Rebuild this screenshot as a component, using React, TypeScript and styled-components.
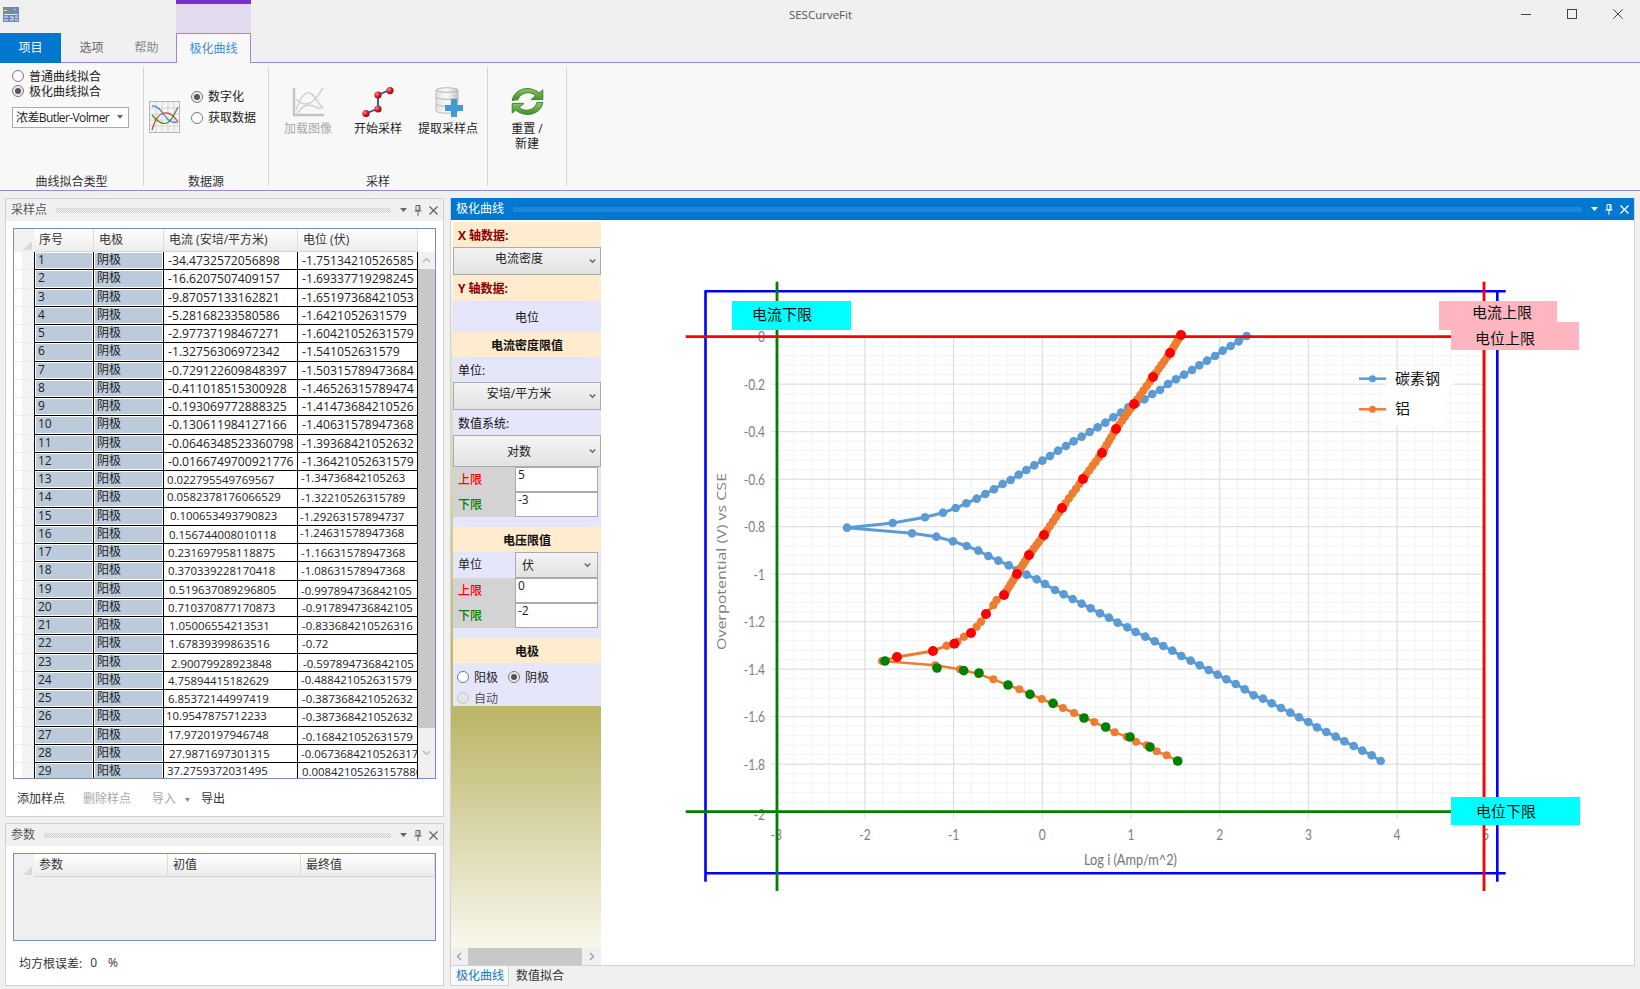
import React from 'react';
import styled, { createGlobalStyle } from 'styled-components';

type Pt = [number, number];

const UI_FONT = '"Open Sans", "Noto Sans CJK SC", sans-serif';

const GlobalStyle = createGlobalStyle`
  html, body {
    margin: 0;
    padding: 0;
    background: #f0f0f0;
    overflow: hidden;
  }
  body {
    font-family: ${UI_FONT};
    font-size: 12px;
    color: #222;
  }
`;

const Window = styled.div`
  width: 1640px;
  height: 989px;
  display: flex;
  flex-direction: column;
  background: #f0f0f0;
  overflow: hidden;
`;

/* ---------- title bar ---------- */

const TitleBar = styled.div`
  height: 33px;
  display: grid;
  grid-template-columns: 176px 75px 1fr 140px;
  flex: none;
`;

const AppIconSlot = styled.div`
  padding: 7px 0 0 3px;
`;

const ContextHeader = styled.div`
  background: #e3daf0;
  border-top: 4px solid #7b2fd0;
`;

const AppTitle = styled.div`
  padding: 7px 110px 0 0;
  text-align: center;
  font-size: 11.5px;
  line-height: 16px;
  color: #555;
`;

const WindowButtons = styled.div`
  display: flex;
  justify-content: flex-end;
  align-items: flex-start;
  gap: 36px;
  padding: 9px 17px 0 0;
`;

/* ---------- ribbon ---------- */

const TabStrip = styled.div`
  height: 29px;
  display: flex;
  flex: none;
  border-bottom: 1px solid #a884d0;
`;

const RibbonTab = styled.div<{ $w: number; $color: string; $bg?: string }>`
  width: ${p => p.$w}px;
  height: 30px;
  line-height: 29px;
  text-align: center;
  color: ${p => p.$color};
  background: ${p => p.$bg ?? 'transparent'};
`;

const ContextTab = styled.div`
  width: 75px;
  height: 30px;
  box-sizing: border-box;
  margin-left: 5px;
  line-height: 29px;
  text-align: center;
  color: #3b8ed8;
  background: #f8f8f8;
  border: 1px solid #a884d0;
  border-bottom: none;
`;

const Ribbon = styled.div`
  height: 128px;
  box-sizing: border-box;
  flex: none;
  display: flex;
  padding: 4px 0;
  background: #f8f8f8;
  border-bottom: 1px solid #a884d0;
`;

const RibbonGroup = styled.div<{ $w: number }>`
  width: ${p => p.$w}px;
  box-sizing: border-box;
  display: flex;
  flex-direction: column;
  border-right: 1px solid #d6d6d6;
`;

const GroupBody = styled.div<{ $pad?: string; $row?: boolean }>`
  flex: 1;
  display: flex;
  flex-direction: ${p => (p.$row ? 'row' : 'column')};
  padding: ${p => p.$pad ?? '0'};
`;

const GroupLabel = styled.div`
  height: 16px;
  line-height: 16px;
  margin-bottom: -4px;
  text-align: center;
  color: #333;
`;

const RadioRow = styled.div<{ $h?: number; $disabled?: boolean }>`
  height: ${p => p.$h ?? 15}px;
  display: flex;
  align-items: center;
  gap: 5px;
  line-height: 15px;
  color: ${p => (p.$disabled ? '#555' : '#222')};
  white-space: nowrap;
`;

const RadioMark = styled.span<{ $checked?: boolean; $disabled?: boolean }>`
  width: 12px;
  height: 12px;
  box-sizing: border-box;
  flex: none;
  border-radius: 50%;
  border: 1px solid ${p => (p.$disabled ? '#c4c4c4' : '#777')};
  background: ${p => (p.$disabled ? '#e4e4e4' : p.$checked ? '#ececec' : '#fff')};
  display: flex;
  align-items: center;
  justify-content: center;
  &::after {
    content: '';
    display: ${p => (p.$checked ? 'block' : 'none')};
    width: 6px;
    height: 6px;
    border-radius: 50%;
    background: #555;
  }
`;

const FitSelect = styled.div`
  width: 117px;
  height: 21px;
  box-sizing: border-box;
  margin-top: 8px;
  padding: 0 5px 0 3px;
  display: flex;
  align-items: center;
  justify-content: space-between;
  background: #fff;
  border: 1px solid #ababab;
  white-space: nowrap;
  letter-spacing: -0.6px;
`;

const SourceIcon = styled.div`
  margin-top: 34px;
  height: 32px;
`;

const SourceRadios = styled.div`
  display: flex;
  flex-direction: column;
  gap: 6px;
  margin: 22px 0 0 11px;
`;

const RibbonButton = styled.div<{ $w: number; $disabled?: boolean }>`
  width: ${p => p.$w}px;
  display: flex;
  flex-direction: column;
  align-items: center;
  color: ${p => (p.$disabled ? '#aaa' : '#222')};
  line-height: 15px;
  text-align: center;
  white-space: nowrap;
`;

const ButtonIcon = styled.div`
  height: 30px;
  margin-bottom: 4px;
`;

/* ---------- dock panels ---------- */

const Workspace = styled.div`
  flex: 1;
  display: flex;
  padding: 7px 0 0 5px;
  gap: 6px;
  min-height: 0;
`;

const LeftColumn = styled.div`
  width: 439px;
  display: flex;
  flex-direction: column;
  gap: 6px;
`;

const Panel = styled.div<{ $h: number }>`
  height: ${p => p.$h}px;
  box-sizing: border-box;
  display: flex;
  flex-direction: column;
  background: #fff;
  border: 1px solid #d2d2d2;
`;

const PanelHeader = styled.div<{ $active?: boolean }>`
  height: 22px;
  flex: none;
  display: flex;
  align-items: center;
  padding: 0 5px;
  background: ${p => (p.$active ? '#0078d0' : '#f0f0f0')};
  color: ${p => (p.$active ? '#fff' : '#555')};
`;

const PanelTitle = styled.div`
  line-height: 22px;
  white-space: nowrap;
`;

const DotStrip = styled.div<{ $active?: boolean }>`
  flex: 1;
  height: 5px;
  margin: 0 9px;
  background-image: conic-gradient(${p => (p.$active ? '#3a96e0' : '#d0d0d0')} 25%, transparent 0 50%, ${p => (p.$active ? '#3a96e0' : '#d0d0d0')} 0 75%, transparent 0);
  background-size: 2px 2px;
`;

const HeaderIcons = styled.div`
  display: flex;
  align-items: center;
  gap: 7px;
`;

const PanelBody = styled.div`
  flex: 1;
  padding: 7px 7px 0;
  display: flex;
  flex-direction: column;
  min-height: 0;
`;

/* ---------- data grid ---------- */

const GridFrame = styled.div<{ $h: number; $bg?: string }>`
  height: ${p => p.$h}px;
  box-sizing: border-box;
  flex: none;
  border: 1px solid #7590b2;
  background: ${p => p.$bg ?? '#fff'};
  display: flex;
  overflow: hidden;
`;

const GridMain = styled.div`
  flex: 1;
  min-width: 0;
`;

const GridHeadRow = styled.div`
  height: 23px;
  display: flex;
  background: #fff;
`;

const CornerCell = styled.div`
  width: 20px;
  flex: none;
  display: flex;
  align-items: flex-end;
  justify-content: flex-end;
  padding: 0 2px 2px 0;
  box-sizing: border-box;
  background: #f1f1f1;
`;

const HeadCell = styled.div<{ $w: number }>`
  width: ${p => p.$w}px;
  box-sizing: border-box;
  flex: none;
  padding-left: 5px;
  line-height: 22px;
  color: #333;
  background: linear-gradient(#ffffff, #ececec);
  border-right: 1px solid #dcdcdc;
  border-bottom: 1px solid #d4d4d4;
  white-space: nowrap;
`;

const DataRow = styled.div`
  height: 18.26px;
  display: flex;
`;

const RowSelector = styled.div`
  width: 20px;
  flex: none;
  box-sizing: border-box;
  background: linear-gradient(90deg, #fff 0 40%, #f3f3f3 40%);
  border-bottom: 1px solid #ececec;
`;

const KeyCell = styled.div<{ $w: number; $first?: boolean }>`
  width: ${p => p.$w}px;
  box-sizing: border-box;
  flex: none;
  padding-left: 3px;
  line-height: 16px;
  background: #bccbdb;
  box-shadow: inset 0 0 0 1px #fff;
  border-right: 1px solid #000;
  border-bottom: 1px solid #000;
  border-left: ${p => (p.$first ? '1px solid #000' : 'none')};
`;

const ValueCell = styled.div<{ $w: number; $pad: number; $small: boolean; $lift: number }>`
  width: ${p => p.$w}px;
  box-sizing: border-box;
  flex: none;
  padding-left: ${p => p.$pad}px;
  font-size: ${p => (p.$small ? 11.4 : 12.2)}px;
  line-height: ${p => 17 - 2 * p.$lift}px;
  background: #fff;
  border-right: 1px solid #000;
  border-bottom: 1px solid #000;
  white-space: nowrap;
  overflow: hidden;
`;

const VScroll = styled.div`
  width: 17px;
  flex: none;
  margin-top: 23px;
  display: flex;
  flex-direction: column;
  background: #f0f0f0;
`;

const ScrollArrow = styled.div<{ $w?: number; $h?: number }>`
  width: ${p => (p.$w ? `${p.$w}px` : 'auto')};
  height: ${p => (p.$h ? `${p.$h}px` : 'auto')};
  flex: none;
  display: flex;
  align-items: center;
  justify-content: center;
`;

const VThumb = styled.div`
  height: 459px;
  background: #c8c8c8;
`;

const GridToolbar = styled.div`
  flex: 1;
  display: flex;
  align-items: center;
  padding-left: 4px;
`;

const ToolItem = styled.div<{ $gap?: number; $disabled?: boolean }>`
  margin-left: ${p => p.$gap ?? 0}px;
  color: ${p => (p.$disabled ? '#a8a8a8' : '#333')};
  white-space: nowrap;
`;

const ErrorLine = styled.div`
  flex: 1;
  display: flex;
  align-items: center;
  padding-left: 6px;
  margin-top: -1px;
  color: #333;
`;

const ErrorValue = styled.span<{ $gap: number }>`
  margin-left: ${p => p.$gap}px;
`;

/* ---------- document panel ---------- */

const DocColumn = styled.div`
  width: 1185px;
  display: flex;
  flex-direction: column;
`;

const DocPanel = styled.div`
  height: 768px;
  box-sizing: border-box;
  display: flex;
  flex-direction: column;
  background: #fff;
  border: 1px solid #d2d2d2;
  border-top: none;
`;

const DocBody = styled.div`
  flex: 1;
  display: flex;
  min-height: 0;
`;

const SideBar = styled.div`
  width: 150px;
  flex: none;
  display: flex;
  flex-direction: column;
  background: linear-gradient(#ffffff 0%, #bdb76b 60%, #bdb76b 67%, #f7f6ea 97%);
`;

const SideContent = styled.div`
  flex: 1;
  padding: 2px 0 0 2px;
`;

const SideRow = styled.div<{ $h: number; $tone: 'peach' | 'lavender'; $align?: string; $bold?: boolean; $color?: string; $pad?: number }>`
  height: ${p => p.$h}px;
  display: flex;
  align-items: center;
  justify-content: ${p => p.$align ?? 'flex-start'};
  padding-left: ${p => p.$pad ?? 5}px;
  box-sizing: border-box;
  background: ${p => (p.$tone === 'peach' ? '#ffebcd' : '#e6e6fa')};
  font-weight: ${p => (p.$bold ? 700 : 400)};
  color: ${p => p.$color ?? '#111'};
  white-space: nowrap;
`;

const SideSelect = styled.div<{ $h: number }>`
  height: ${p => p.$h}px;
  box-sizing: border-box;
  display: flex;
  align-items: center;
  background: linear-gradient(#f4f4f4, #e2e2e2);
  border: 1px solid #ababab;
`;

const SelectText = styled.div<{ $lift?: number }>`
  flex: 1;
  text-align: center;
  padding-bottom: ${p => p.$lift ?? 0}px;
`;

const SelectChevron = styled.div`
  width: 16px;
  flex: none;
  display: flex;
  justify-content: center;
`;

const LimitRow = styled.div`
  height: 25px;
  display: grid;
  grid-template-columns: 62px 83px 3px;
  background: #e6e6fa;
`;

const LimitLabel = styled.div<{ $color: string }>`
  background: #d3d3d3;
  color: ${p => p.$color};
  font-weight: 500;
  line-height: 25px;
  padding-left: 5px;
`;

const LimitInput = styled.div`
  box-sizing: border-box;
  background: #fff;
  border: 1px solid #ababab;
  padding-left: 2px;
  line-height: 14px;
`;

const UnitRow = styled.div`
  height: 26px;
  display: grid;
  grid-template-columns: 62px 83px 3px;
  background: #e6e6fa;
`;

const UnitLabel = styled.div`
  line-height: 26px;
  padding-left: 5px;
`;

const UnitSelect = styled.div`
  box-sizing: border-box;
  padding: 0 6px;
  display: flex;
  align-items: center;
  justify-content: space-between;
  background: linear-gradient(#f4f4f4, #e2e2e2);
  border: 1px solid #ababab;
`;

const Spacer = styled.div<{ $h: number }>`
  height: ${p => p.$h}px;
  background: #e6e6fa;
`;

const ElectrodeBox = styled.div`
  height: 43px;
  box-sizing: border-box;
  padding: 6px 0 0 4px;
  background: #e6e6fa;
  display: flex;
  flex-direction: column;
  gap: 5px;
`;

const RadioLine = styled.div`
  display: flex;
  gap: 10px;
`;

const HScroll = styled.div`
  height: 17px;
  flex: none;
  display: flex;
  background: #f0f0f0;
`;

const HThumb = styled.div`
  width: 114px;
  background: #c8c8c8;
`;

const ChartPane = styled.div`
  position: relative;
  flex: 1;
  overflow: hidden;
`;

const ChartSvg = styled.svg`
  display: block;
`;

const LimitTag = styled.div<{ $x: number; $y: number; $w: number; $h: number; $bg: string; $pad: number; $dy?: number }>`
  position: absolute;
  left: ${p => p.$x - 601}px;
  top: ${p => p.$y - 220}px;
  width: ${p => p.$w}px;
  height: ${p => p.$h}px;
  box-sizing: border-box;
  padding-left: ${p => p.$pad}px;
  background: ${p => p.$bg};
  font-size: 15px;
  line-height: ${p => p.$h + 2 * (p.$dy ?? 0)}px;
  color: #111;
  overflow: hidden;
`;

const DocTabs = styled.div`
  height: 20px;
  display: flex;
  border-left: 1px solid #d2d2d2;
`;

const DocTab = styled.div<{ $active?: boolean }>`
  width: 58px;
  box-sizing: border-box;
  padding-left: ${p => (p.$active ? 5 : 7)}px;
  line-height: 20px;
  white-space: nowrap;
  color: ${p => (p.$active ? '#1a78c8' : '#333')};
  background: ${p => (p.$active ? '#f8f8f8' : 'transparent')};
  border-right: ${p => (p.$active ? '1px solid #d2d2d2' : 'none')};
  border-bottom: ${p => (p.$active ? '1px solid #d2d2d2' : 'none')};
`;

/* ---------- small drawings ---------- */

const AppIcon = () => (
  <svg width="16" height="15" viewBox="0 0 16 15">
    <rect width="16" height="15" fill="#7388b8" />
    <rect x="1" y="3" width="3" height="1" fill="#ffe14a" />
    <rect x="7" y="4" width="2" height="2" fill="#2fbf4f" />
    <rect x="11" y="2" width="2" height="1" fill="#d8e04a" />
    <rect x="1" y="7" width="14" height="1" fill="#dfe6f2" />
    <path d="M1 10h4M1 13h4M7 10h3v3H7M12 10h3M12 13h3" stroke="#e6ecf6" fill="none" />
  </svg>
);

const WinMin = () => (
  <svg width="10" height="10" viewBox="0 0 10 10"><path d="M0 5.5h10" stroke="#444" /></svg>
);
const WinMax = () => (
  <svg width="10" height="10" viewBox="0 0 10 10"><rect x=".5" y=".5" width="9" height="9" fill="none" stroke="#444" /></svg>
);
const WinClose = () => (
  <svg width="10" height="10" viewBox="0 0 10 10"><path d="M.3.3l9.4 9.4M9.7.3L.3 9.7" stroke="#444" /></svg>
);

const TriDown = ({ c = '#666', w = 7 }: { c?: string; w?: number }) => (
  <svg width={w} height="4" viewBox="0 0 7 4" preserveAspectRatio="none"><path d="M0 0h7L3.5 4z" fill={c} /></svg>
);

const PinIcon = ({ c }: { c: string }) => (
  <svg width="8" height="11" viewBox="0 0 8 11">
    <path d="M2 .5h4v5H2zM5 .5v5M.5 6h7M4 6v5" fill="none" stroke={c} />
  </svg>
);

const XIcon = ({ c }: { c: string }) => (
  <svg width="9" height="9" viewBox="0 0 9 9">
    <path d="M.5.5l8 8M8.5.5l-8 8" stroke={c} strokeWidth="1.3" />
  </svg>
);

const Chevron = ({ dir = 'down', c = '#666', s = 9 }: { dir?: 'down' | 'up' | 'left' | 'right'; c?: string; s?: number }) => {
  const d = { down: 'M1 2l3.5 3.5L8 2', up: 'M1 6l3.5-3.5L8 6', left: 'M6 1L2.5 4.5 6 8', right: 'M3 1l3.5 3.5L3 8' }[dir];
  return (
    <svg width={s} height={s} viewBox="0 0 9 9"><path d={d} fill="none" stroke={c} strokeWidth={s < 9 ? 1.8 : 1.2} /></svg>
  );
};

const CornerMark = () => (
  <svg width="9" height="9" viewBox="0 0 9 9"><path d="M9 0v9H0z" fill="#d9d9d9" /></svg>
);

const ChartGlyph = () => (
  <svg width="31" height="32" viewBox="0 0 31 32">
    <rect x=".5" y=".5" width="30" height="31" fill="#f4f4f4" stroke="#b5b5b5" />
    <path d="M1 7h29M1 13h29M1 19h29M1 25h29M7 1v30M13 1v30M19 1v30M25 1v30" stroke="#d4d4d4" />
    <path d="M3 29C6 18 10 13 15 12s10 3 14 9" fill="none" stroke="#d8402f" strokeWidth="1.2" />
    <path d="M3 14c5 6 10 10 15 8s8-10 11-16" fill="none" stroke="#3a8f2e" strokeWidth="1.2" />
    <path d="M3 5c5-1 9 4 13 10s9 7 13 6" fill="none" stroke="#3d76c4" strokeWidth="1.2" />
  </svg>
);

const LoadImageGlyph = () => (
  <svg width="32" height="30" viewBox="0 0 32 30">
    <path d="M2 1v27h30" fill="none" stroke="#c4c4c4" strokeWidth="2.4" />
    <path d="M4 23C9 10 13 4 18 6s8 11 13 15M4 12c6 6 12 7 18 1s7-9 9-12M5 26c6-8 11-9 16-7s7 3 10 1" fill="none" stroke="#cfcfcf" strokeWidth="1.4" />
  </svg>
);

const SampleGlyph = () => (
  <svg width="32" height="30" viewBox="0 0 32 30">
    <defs>
      <radialGradient id="ball" cx=".35" cy=".35" r=".8">
        <stop offset="0" stopColor="#ff8a8a" />
        <stop offset=".5" stopColor="#d2141e" />
        <stop offset="1" stopColor="#7c0a12" />
      </radialGradient>
    </defs>
    <path d="M4 26.500L16 21.500V8L27.500 3" fill="none" stroke="#1f4f9c" strokeWidth="1.8" />
    <circle cx="4" cy="26.500" r="3.600" fill="url(#ball)" />
    <circle cx="16" cy="22" r="3.600" fill="url(#ball)" />
    <circle cx="16" cy="8" r="3.600" fill="url(#ball)" />
    <circle cx="28" cy="3.600" r="3.600" fill="url(#ball)" />
  </svg>
);

const ExtractGlyph = () => (
  <svg width="30" height="31" viewBox="0 0 30 31">
    <defs>
      <linearGradient id="can" x1="0" x2="1" y1="0" y2="0">
        <stop offset="0" stopColor="#e2e2e2" />
        <stop offset=".5" stopColor="#fafafa" />
        <stop offset="1" stopColor="#c6c6c6" />
      </linearGradient>
    </defs>
    <path d="M3 3c0-3 22-3 22 0v21c0 3-22 3-22 0z" fill="url(#can)" stroke="#bdbdbd" />
    <path d="M3 3c0 3 22 3 22 0M3 10c0 3 22 3 22 0M3 17c0 3 22 3 22 0" fill="none" stroke="#b5b5b5" />
    <path d="M18 12h6v6h6v6h-6v6h-6v-6h-6v-6h6z" fill="#3f9ad6" />
  </svg>
);

const RefreshGlyph = () => (
  <svg width="33" height="29" viewBox="3 0 28 30" preserveAspectRatio="none">
    <defs>
      <linearGradient id="arrowGreen" x1="0" x2="0" y1="0" y2="1">
        <stop offset="0" stopColor="#8cc762" />
        <stop offset="1" stopColor="#3f8f2a" />
      </linearGradient>
    </defs>
    <path d="M4 14C5 5 13 0 20 2c3 1 5 2 7 4l3-3v10H20l4-4c-4-5-13-4-15 4z" fill="url(#arrowGreen)" stroke="#2f7a22" strokeWidth=".8" />
    <path d="M30 16c-1 9-9 14-16 12-3-1-5-2-7-4l-3 3V17h10l-4 4c4 5 13 4 15-5z" fill="url(#arrowGreen)" stroke="#2f7a22" strokeWidth=".8" />
  </svg>
);

/* ---------- data ---------- */

const rows: [string, string, string, number, number][] = [
  ['阴极', '-34.4732572056898', '-1.75134210526585', 4, 4],
  ['阴极', '-16.6207507409157', '-1.69337719298245', 4, 4],
  ['阴极', '-9.87057133162821', '-1.65197368421053', 4, 4],
  ['阴极', '-5.28168233580586', '-1.6421052631579', 4, 4],
  ['阴极', '-2.97737198467271', '-1.60421052631579', 4, 4],
  ['阴极', '-1.32756306972342', '-1.541052631579', 4, 4],
  ['阴极', '-0.729122609848397', '-1.50315789473684', 4, 4],
  ['阴极', '-0.411018515300928', '-1.46526315789474', 4, 4],
  ['阴极', '-0.193069772888325', '-1.41473684210526', 4, 4],
  ['阴极', '-0.130611984127166', '-1.40631578947368', 4, 4],
  ['阴极', '-0.0646348523360798', '-1.39368421052632', 4, 4],
  ['阴极', '-0.0166749700921776', '-1.36421052631579', 4, 4],
  ['阳极', '0.022795549769567', '-1.34736842105263', 3, 3],
  ['阳极', '0.0582378176066529', '-1.32210526315789', 3, 3],
  ['阳极', '0.100653493790823', '-1.29263157894737', 6, 2],
  ['阳极', '0.156744008010118', '-1.24631578947368', 5, 2],
  ['阳极', '0.231697958118875', '-1.16631578947368', 4, 3],
  ['阳极', '0.370339228170418', '-1.08631578947368', 4, 3],
  ['阳极', '0.519637089296805', '-0.997894736842105', 5, 3],
  ['阳极', '0.710370877170873', '-0.917894736842105', 4, 4],
  ['阳极', '1.05006554213531', '-0.833684210526316', 5, 4],
  ['阳极', '1.67839399863516', '-0.72', 5, 4],
  ['阳极', '2.90079928923848', '-0.597894736842105', 7, 5],
  ['阳极', '4.75894415182629', '-0.488421052631579', 4, 3],
  ['阳极', '6.85372144997419', '-0.387368421052632', 4, 4],
  ['阳极', '10.9547875712233', '-0.387368421052632', 2, 4],
  ['阳极', '17.9720197946748', '-0.168421052631579', 4, 4],
  ['阳极', '27.9871697301315', '-0.0673684210526317', 5, 3],
  ['阳极', '37.2759372031495', '0.00842105263157886', 3, 4],
];

const currentLift: Record<number, number> = { 13: 1, 14: 1, 25: 1, 26: 1, 28: 1, 22: -1 };
const potentialLift: Record<number, number> = { 12: 2, 15: 2, 23: 1, 18: -1, 26: -1, 22: -1 };

const z = (ox: number, oy: number, pts: Pt[]): Pt[] => pts.map(([x, y]) => [ox + x / 3, oy + y / 3]);

const blueUpper = z(680, 270, [
  [501, 773], [638, 759], [735, 742], [789, 728], [827, 714], [859, 700], [890, 686], [916, 672], [942, 658], [968, 642],
  [992, 630], [1016, 614], [1039, 600], [1063, 586], [1087, 572], [1110, 558], [1134, 542], [1158, 528], [1181, 514],
  [1205, 500], [1229, 486], [1253, 472], [1276, 458], [1300, 442], [1323, 428], [1345, 412], [1369, 400], [1393, 388],
  [1417, 372], [1440, 360], [1464, 342], [1488, 328], [1512, 314], [1536, 300], [1558, 286], [1581, 272], [1605, 258],
  [1628, 242], [1652, 228], [1676, 214], [1700, 198],
]);

const blueLower = [
  ...z(680, 270, [[696, 790], [769, 800], [819, 814], [860, 828], [895, 842], [925, 858], [955, 872], [986, 886], [1012, 900], [1040, 914], [1070, 928], [1095, 942]]),
  ...z(680, 590, [[1125, 0], [1151, 13], [1178, 27], [1205, 41], [1232, 55], [1260, 70], [1287, 83], [1313, 98], [1342, 112], [1367, 126], [1396, 140], [1424, 154]]),
  ...z(1160, 590, [
    [10, 168], [37, 182], [64, 198], [92, 212], [119, 226], [146, 240], [173, 254], [199, 268], [227, 282], [254, 298], [281, 316],
    [309, 326], [335, 340], [363, 354], [391, 368], [417, 382], [445, 396], [471, 412], [499, 426], [527, 440], [553, 454], [581, 468],
    [607, 482], [635, 496], [662, 513],
  ]),
];

const redPts: Pt[] = [
  ...z(680, 590, [[651, 201], [759, 183], [823, 161], [873, 129], [918, 72], [972, 15]]),
  ...z(680, 270, [[1011, 912], [1047, 855], [1092, 795], [1146, 714], [1209, 627], [1266, 549], [1308, 477], [1362, 402], [1419, 321]]),
  ...z(1160, 270, [[30, 249], [63, 195]]),
];

const greenPts: Pt[] = [
  ...z(680, 590, [[615, 213], [771, 234], [851, 242], [897, 249], [984, 285], [1050, 313], [1119, 340], [1212, 384], [1277, 411], [1350, 441], [1410, 471]]),
  [1177.7, 761],
];

const orangeLower: Pt[] = z(680, 590, [
  [606, 213], [766, 226], [840, 238], [895, 252], [940, 268], [1018, 298], [1085, 327], [1149, 354], [1182, 369], [1243, 396],
  [1304, 427], [1340, 440], [1368, 455], [1400, 466], [1430, 484],
]).concat(z(1160, 590, [[20, 496]]), [[1177.7, 761]]);

const densify = (pts: Pt[], n: number): Pt[] => {
  const out: Pt[] = [];
  pts.forEach((p, i) => {
    out.push(p);
    const q = pts[i + 1];
    if (!q) return;
    for (let k = 1; k <= n; k++) {
      out.push([p[0] + ((q[0] - p[0]) * k) / (n + 1), p[1] + ((q[1] - p[1]) * k) / (n + 1)]);
    }
  });
  return out;
};

const orangeUpper: Pt[] = [
  ...z(680, 590, [[651, 201], [759, 183], [800, 167], [832, 155], [852, 140], [873, 129], [890, 110], [903, 95], [918, 72], [940, 45], [950, 30]]),
  ...densify(redPts.slice(5), 5),
];

const toLine = (pts: Pt[]) => pts.map(p => `${p[0].toFixed(1)},${p[1].toFixed(1)}`).join(' ');

const X0 = 1042.3;
const XU = 88.7;
const Y0 = 336.7;
const YU = 237.5;
const sx = (v: number) => X0 + XU * v;
const sy = (v: number) => Y0 - YU * v;

const AXIS = { fontFamily: 'Lato, sans-serif', fontSize: 15, fill: '#808080' };

const AxisNum = ({ x, y, anchor, children }: { x: number; y: number; anchor: 'middle' | 'end'; children: string }) => (
  <text {...AXIS} textAnchor={anchor} transform={`translate(${x} ${y}) scale(.8 1)`}>{children}</text>
);

const Dots = ({ pts, r, fill }: { pts: Pt[]; r: number; fill: string }) => (
  <g fill={fill}>
    {pts.map((p, i) => <circle key={i} cx={p[0]} cy={p[1]} r={r} />)}
  </g>
);

const Chart = () => {
  const xMinor: number[] = [];
  for (let i = 0; i <= 40; i++) xMinor.push(-3 + i * 0.2);
  const yMinor: number[] = [];
  for (let i = 0; i <= 50; i++) yMinor.push(-i * 0.04);
  const xMajor = [-3, -2, -1, 0, 1, 2, 3, 4, 5];
  const yMajor = [0, 0.2, 0.4, 0.6, 0.8, 1, 1.2, 1.4, 1.6, 1.8, 2];

  return (
    <ChartSvg width="1033" height="745" viewBox="601 220 1033 745">
      <g stroke="#f3f3f3" strokeWidth="1">
        {xMinor.map(v => <line key={v} x1={sx(v)} x2={sx(v)} y1={Y0} y2={sy(-2)} />)}
        {yMinor.map(v => <line key={v} x1={sx(-3)} x2={sx(5)} y1={sy(v)} y2={sy(v)} />)}
      </g>
      <g stroke="#dcdcdc" strokeWidth="1">
        {xMajor.map(v => <line key={v} x1={sx(v)} x2={sx(v)} y1={Y0} y2={sy(-2) + 7} />)}
        {yMajor.map(v => <line key={v} x1={sx(-3) - 5} x2={sx(5)} y1={sy(-v)} y2={sy(-v)} />)}
      </g>

      {yMajor.map(v => (
        <AxisNum key={v} x={765} y={sy(-v) + (v === 2 ? 8 : 5.500)} anchor="end">
          {v === 0 ? '0' : `-${v}`}
        </AxisNum>
      ))}
      {xMajor.map(v => (
        <AxisNum key={v} x={sx(v)} y={840} anchor="middle">{String(v)}</AxisNum>
      ))}
      <text
        fontFamily="'Open Sans', sans-serif"
        fontSize="13.500"
        fill="#808080"
        textAnchor="middle"
        textLength="177"
        lengthAdjust="spacingAndGlyphs"
        transform="rotate(-90 726 561.500)"
        x="726"
        y="561.500"
      >
        Overpotential (V) vs CSE
      </text>
      <text
        fontFamily="Lato, sans-serif"
        fontSize="16"
        fill="#757575"
        textLength="93"
        lengthAdjust="spacingAndGlyphs"
        x="1084"
        y="865"
      >
        Log i (Amp/m^2)
      </text>

      <rect x="1386" y="370" width="67" height="15" fill="#fff" />
      <rect x="1386" y="385" width="59" height="40" fill="#fff" />
      <path d="M1359 378.700h27" stroke="#5b9bd5" strokeWidth="2.500" />
      <circle cx="1372.500" cy="378.700" r="3.500" fill="#5b9bd5" />
      <path d="M1359 409.300h27" stroke="#ed7d31" strokeWidth="2.500" />
      <circle cx="1372.500" cy="409.300" r="3.500" fill="#ed7d31" />
      <text x="1395" y="383.500" fontFamily={UI_FONT} fontSize="15" fill="#111">碳素钢</text>
      <text x="1395" y="414" fontFamily={UI_FONT} fontSize="15" fill="#111">铝</text>

      <polyline points={toLine(blueUpper)} fill="none" stroke="#5b9bd5" strokeWidth="3" />
      <polyline points={toLine([blueUpper[0], ...blueLower])} fill="none" stroke="#5b9bd5" strokeWidth="3" />
      <Dots pts={blueUpper} r={4.300} fill="#5b9bd5" />
      <Dots pts={blueLower} r={4.300} fill="#5b9bd5" />

      <polyline points={toLine(orangeUpper)} fill="none" stroke="#ed7d31" strokeWidth="3" />
      <polyline points={toLine([orangeUpper[0], ...orangeLower])} fill="none" stroke="#ed7d31" strokeWidth="2.500" />
      <Dots pts={orangeUpper} r={4.200} fill="#ed7d31" />
      <Dots pts={orangeLower.slice(0, -1)} r={4} fill="#ed7d31" />
      <Dots pts={greenPts} r={4.800} fill="#008000" />
      <Dots pts={redPts} r={5} fill="#ff0000" />

      <path d="M705.500 291V881.700M1497.300 291V881.700M704.500 291.300H1505.700M704.500 873.300H1505.700" stroke="#0000ff" strokeWidth="2.600" fill="none" />
      <path d="M777 281.700V891M685.700 811.700H1470" stroke="#008000" strokeWidth="2.800" fill="none" />
      <path d="M1484 281.700V891M685.700 336.700H1470" stroke="#ff0000" strokeWidth="2.800" fill="none" />
    </ChartSvg>
  );
};

const PanelIcons = ({ c = '#666' }: { c?: string }) => (
  <HeaderIcons>
    <TriDown c={c} />
    <PinIcon c={c} />
    <XIcon c={c} />
  </HeaderIcons>
);

const Radio = ({ checked, disabled, h, children }: { checked?: boolean; disabled?: boolean; h?: number; children: string }) => (
  <RadioRow $h={h} $disabled={disabled}>
    <RadioMark $checked={checked} $disabled={disabled} />
    {children}
  </RadioRow>
);

const App: React.FC = () => (
  <Window>
    <GlobalStyle />
    <TitleBar>
      <AppIconSlot><AppIcon /></AppIconSlot>
      <ContextHeader />
      <AppTitle>SESCurveFit</AppTitle>
      <WindowButtons>
        <WinMin />
        <WinMax />
        <WinClose />
      </WindowButtons>
    </TitleBar>

    <TabStrip>
      <RibbonTab $w={61} $color="#fff" $bg="#0078d0">项目</RibbonTab>
      <RibbonTab $w={61} $color="#666">选项</RibbonTab>
      <RibbonTab $w={49} $color="#8a8a8a">帮助</RibbonTab>
      <ContextTab>极化曲线</ContextTab>
    </TabStrip>

    <Ribbon>
      <RibbonGroup $w={144}>
        <GroupBody $pad="1.5px 0 0 12px">
          <Radio>普通曲线拟合</Radio>
          <Radio checked>极化曲线拟合</Radio>
          <FitSelect>浓差Butler-Volmer<TriDown w={6} /></FitSelect>
        </GroupBody>
        <GroupLabel>曲线拟合类型</GroupLabel>
      </RibbonGroup>
      <RibbonGroup $w={125}>
        <GroupBody $row $pad="0 0 0 5px">
          <SourceIcon><ChartGlyph /></SourceIcon>
          <SourceRadios>
            <Radio checked>数字化</Radio>
            <Radio>获取数据</Radio>
          </SourceRadios>
        </GroupBody>
        <GroupLabel>数据源</GroupLabel>
      </RibbonGroup>
      <RibbonGroup $w={219}>
        <GroupBody $row $pad="20px 0 0 4px">
          <RibbonButton $w={70} $disabled><ButtonIcon><LoadImageGlyph /></ButtonIcon>加载图像</RibbonButton>
          <RibbonButton $w={70}><ButtonIcon><SampleGlyph /></ButtonIcon>开始采样</RibbonButton>
          <RibbonButton $w={70}><ButtonIcon><ExtractGlyph /></ButtonIcon>提取采样点</RibbonButton>
        </GroupBody>
        <GroupLabel>采样</GroupLabel>
      </RibbonGroup>
      <RibbonGroup $w={79}>
        <GroupBody $row $pad="20px 0 0 0">
          <RibbonButton $w={78}><ButtonIcon><RefreshGlyph /></ButtonIcon>重置 /<br />新建</RibbonButton>
        </GroupBody>
      </RibbonGroup>
    </Ribbon>

    <Workspace>
      <LeftColumn>
        <Panel $h={619}>
          <PanelHeader>
            <PanelTitle>采样点</PanelTitle>
            <DotStrip />
            <PanelIcons />
          </PanelHeader>
          <PanelBody>
            <GridFrame $h={551}>
              <GridMain>
                <GridHeadRow>
                  <CornerCell><CornerMark /></CornerCell>
                  <HeadCell $w={60}>序号</HeadCell>
                  <HeadCell $w={70}>电极</HeadCell>
                  <HeadCell $w={134}>电流 (安培/平方米)</HeadCell>
                  <HeadCell $w={120}>电位 (伏)</HeadCell>
                </GridHeadRow>
                {rows.map((r, i) => (
                  <DataRow key={i}>
                    <RowSelector />
                    <KeyCell $w={60} $first>{i + 1}</KeyCell>
                    <KeyCell $w={70}>{r[0]}</KeyCell>
                    <ValueCell $w={134} $pad={r[3]} $small={i >= 12} $lift={currentLift[i] ?? 0}>{r[1]}</ValueCell>
                    <ValueCell $w={120} $pad={r[4]} $small={i >= 12} $lift={potentialLift[i] ?? 0}>{r[2]}</ValueCell>
                  </DataRow>
                ))}
              </GridMain>
              <VScroll>
                <ScrollArrow $h={17}><Chevron dir="up" c="#b5b5b5" /></ScrollArrow>
                <VThumb />
                <ScrollArrow $h={50}><Chevron dir="down" c="#b5b5b5" /></ScrollArrow>
              </VScroll>
            </GridFrame>
            <GridToolbar>
              <ToolItem>添加样点</ToolItem>
              <ToolItem $gap={18} $disabled>删除样点</ToolItem>
              <ToolItem $gap={21} $disabled>导入</ToolItem>
              <ToolItem $gap={9}><TriDown w={5} c="#888" /></ToolItem>
              <ToolItem $gap={11}>导出</ToolItem>
            </GridToolbar>
          </PanelBody>
        </Panel>
        <Panel $h={163}>
          <PanelHeader>
            <PanelTitle>参数</PanelTitle>
            <DotStrip />
            <PanelIcons />
          </PanelHeader>
          <PanelBody>
            <GridFrame $h={88} $bg="#efefef">
              <GridMain>
                <GridHeadRow>
                  <CornerCell><CornerMark /></CornerCell>
                  <HeadCell $w={134}>参数</HeadCell>
                  <HeadCell $w={133}>初值</HeadCell>
                  <HeadCell $w={134}>最终值</HeadCell>
                </GridHeadRow>
              </GridMain>
            </GridFrame>
            <ErrorLine>
              均方根误差:
              <ErrorValue $gap={8}>0</ErrorValue>
              <ErrorValue $gap={11}>%</ErrorValue>
            </ErrorLine>
          </PanelBody>
        </Panel>
      </LeftColumn>

      <DocColumn>
        <DocPanel>
          <PanelHeader $active>
            <PanelTitle>极化曲线</PanelTitle>
            <DotStrip $active />
            <PanelIcons c="#ffffff" />
          </PanelHeader>
          <DocBody>
            <SideBar>
              <SideContent>
                <SideRow $h={25} $tone="peach" $bold $color="#8b0000">X 轴数据:</SideRow>
                <SideSelect $h={28}><SelectText $lift={6}>电流密度</SelectText><SelectChevron><Chevron s={7} /></SelectChevron></SideSelect>
                <SideRow $h={26} $tone="peach" $bold $color="#8b0000">Y 轴数据:</SideRow>
                <SideRow $h={31} $tone="lavender" $align="center" $pad={0}>电位</SideRow>
                <SideRow $h={25} $tone="peach" $align="center" $bold $pad={0}>电流密度限值</SideRow>
                <SideRow $h={25} $tone="lavender">单位:</SideRow>
                <SideSelect $h={28}><SelectText $lift={6}>安培/平方米</SelectText><SelectChevron><Chevron s={7} /></SelectChevron></SideSelect>
                <SideRow $h={25} $tone="lavender">数值系统:</SideRow>
                <SideSelect $h={32}><SelectText>对数</SelectText><SelectChevron><Chevron s={7} /></SelectChevron></SideSelect>
                <LimitRow><LimitLabel $color="#ff0000">上限</LimitLabel><LimitInput>5</LimitInput></LimitRow>
                <LimitRow><LimitLabel $color="#008000">下限</LimitLabel><LimitInput>-3</LimitInput></LimitRow>
                <Spacer $h={10} />
                <SideRow $h={25} $tone="peach" $align="center" $bold $pad={0}>电压限值</SideRow>
                <UnitRow>
                  <UnitLabel>单位</UnitLabel>
                  <UnitSelect>伏<Chevron s={7} /></UnitSelect>
                </UnitRow>
                <LimitRow><LimitLabel $color="#ff0000">上限</LimitLabel><LimitInput>0</LimitInput></LimitRow>
                <LimitRow><LimitLabel $color="#008000">下限</LimitLabel><LimitInput>-2</LimitInput></LimitRow>
                <Spacer $h={10} />
                <SideRow $h={25} $tone="peach" $align="center" $bold $pad={0}>电极</SideRow>
                <ElectrodeBox>
                  <RadioLine>
                    <Radio h={16}>阳极</Radio>
                    <Radio h={16} checked>阴极</Radio>
                  </RadioLine>
                  <Radio h={16} disabled>自动</Radio>
                </ElectrodeBox>
              </SideContent>
              <HScroll>
                <ScrollArrow $w={17}><Chevron dir="left" c="#999" /></ScrollArrow>
                <HThumb />
                <ScrollArrow $w={19}><Chevron dir="right" c="#999" /></ScrollArrow>
              </HScroll>
            </SideBar>
            <ChartPane>
              <Chart />
              <LimitTag $x={732} $y={301} $w={119} $h={29} $bg="#00ffff" $pad={20} $dy={-1}>电流下限</LimitTag>
              <LimitTag $x={1439} $y={301} $w={118} $h={29} $bg="#ffb6c1" $pad={33} $dy={-3}>电流上限</LimitTag>
              <LimitTag $x={1451} $y={322} $w={128} $h={28} $bg="#ffb6c1" $pad={24} $dy={2}>电位上限</LimitTag>
              <LimitTag $x={1451} $y={797} $w={129} $h={28} $bg="#00ffff" $pad={25}>电位下限</LimitTag>
            </ChartPane>
          </DocBody>
        </DocPanel>
        <DocTabs>
          <DocTab $active>极化曲线</DocTab>
          <DocTab>数值拟合</DocTab>
        </DocTabs>
      </DocColumn>
    </Workspace>
  </Window>
);

export default App;
